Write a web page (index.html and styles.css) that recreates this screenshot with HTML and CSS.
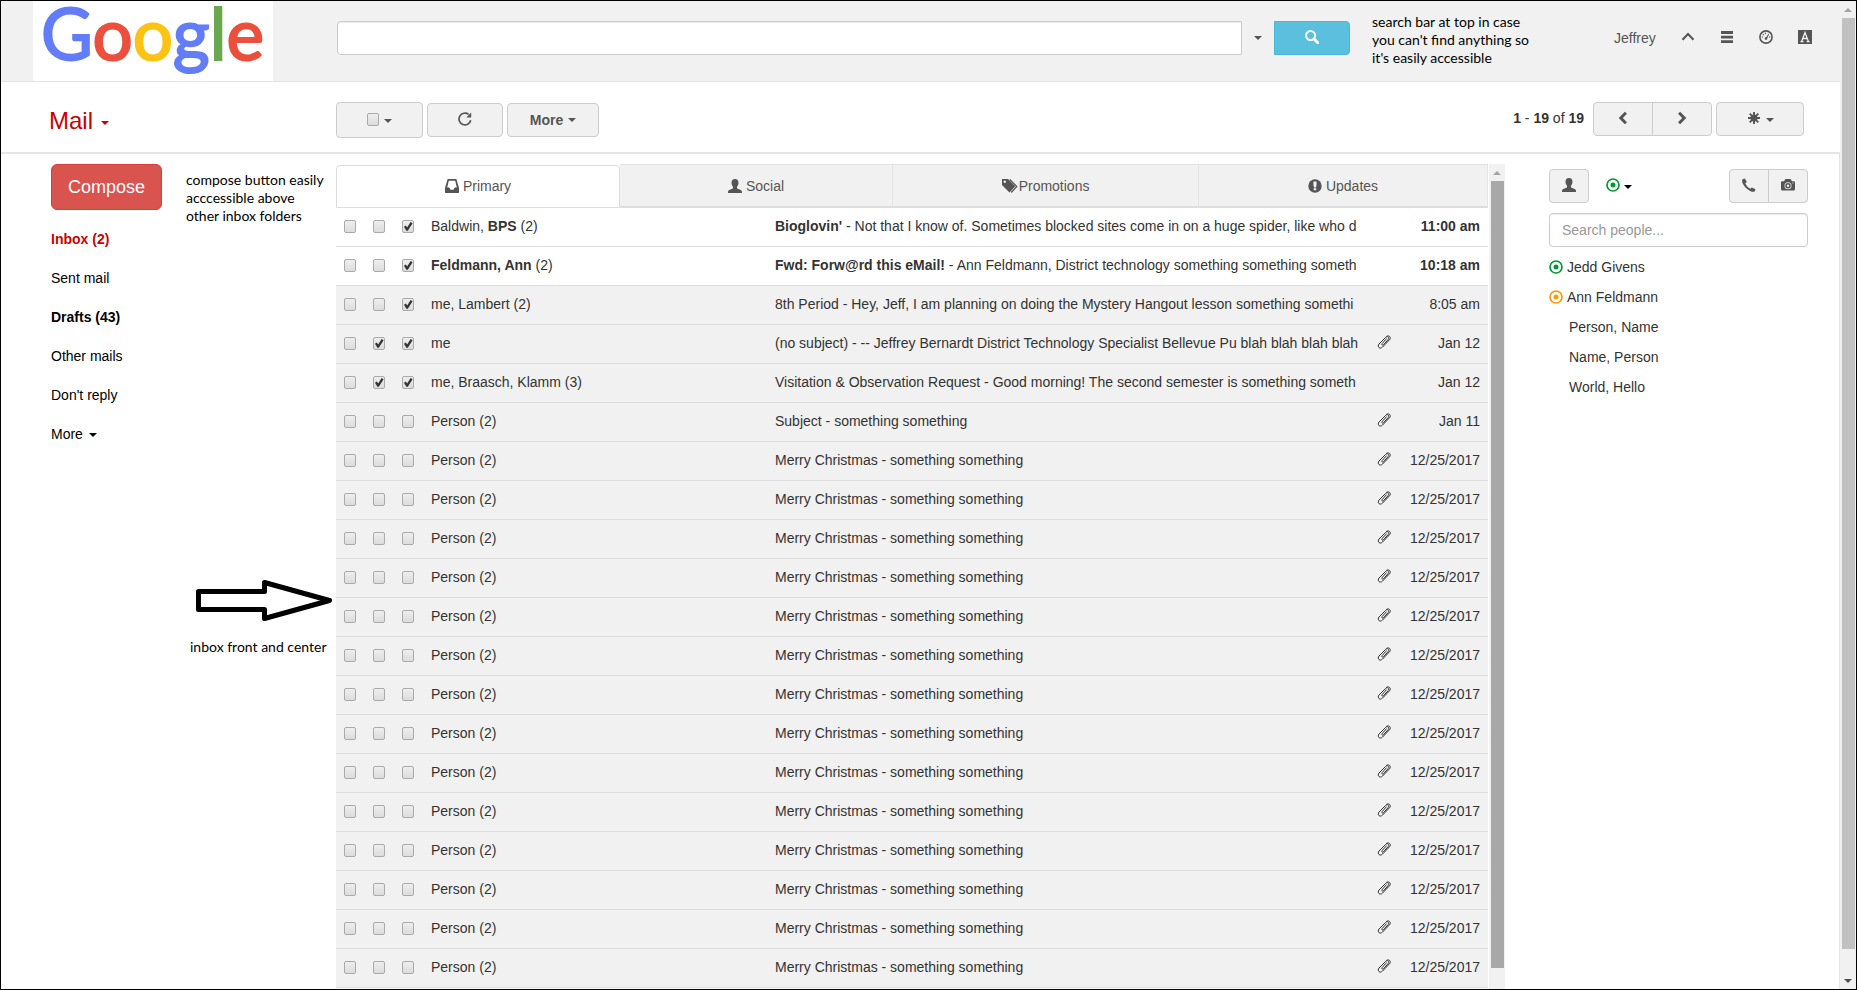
FILE: index.html
```html
<!DOCTYPE html>
<html lang="en">
<head>
<meta charset="utf-8">
<title>Mail</title>
<link rel="stylesheet" href="styles.css">
</head>
<body>
<svg class="sprite" aria-hidden="true">
  <symbol id="search" viewBox="0 0 14 14"><circle cx="5.6" cy="5.6" r="4.5" fill="none" stroke="currentColor" stroke-width="2"/><path d="M9 9l3.8 3.8" stroke="currentColor" stroke-width="2.8" stroke-linecap="round"/></symbol>
  <symbol id="up" viewBox="0 0 14 14"><path d="M1.5 9.8L7 4l5.500 5.800" fill="none" stroke="currentColor" stroke-width="2"/></symbol>
  <symbol id="list" viewBox="0 0 14 14"><path d="M1 1h12v3H1zM1 5.800h12v2.700H1zM1 10.300h12v2.700H1z" fill="currentColor"/></symbol>
  <symbol id="dash" viewBox="0 0 14 14"><circle cx="7" cy="7" r="6.100" fill="none" stroke="currentColor" stroke-width="1.600"/><path d="M6.300 8.600L9.500 3.800l.6.5L7.800 9z" fill="currentColor"/><circle cx="7" cy="8.600" r="1.300" fill="currentColor"/><path d="M2.700 7h1.400M9.900 7h1.400M3.800 4.200l1 .9M6.500 2.800v1.300" stroke="currentColor" stroke-width="1.200"/></symbol>
  <symbol id="fontbg" viewBox="0 0 14 14"><path fill="currentColor" d="M0 0h14v14H0z"/><path d="M3.600 11.600L7 2.500l3.400 9.100M4.800 8.500h4.200M2.500 11.700h3M8.600 11.700h3" fill="none" stroke="#f1f1f1" stroke-width="1.300"/></symbol>
  <symbol id="refresh" viewBox="0 0 14 14"><path d="M12.700 8.300A5.900 5.900 0 1 1 10.600 2.400" fill="none" stroke="currentColor" stroke-width="1.700"/><path d="M13.200.6v4.900H8.300z" fill="currentColor"/></symbol>
  <symbol id="inbox" viewBox="0 0 14 14"><path fill="currentColor" fill-rule="evenodd" d="M2.600 0h8.800L14 9v4.300a.7.700 0 0 1-.7.700H.7a.7.700 0 0 1-.7-.7V9zM3.800 1.800L2.200 8.500h2.100l1.300 2.200h2.800l1.300-2.200h2.100l-1.600-6.700z"/></symbol>
  <symbol id="user" viewBox="0 0 14 14"><path fill="currentColor" d="M7 0c2.400 0 3.500 1.700 3.500 3.700 0 2-.9 3.200-1.500 4.100v1.500c0 .5 4 1.500 4.800 2.700.2.500.2 1.200.2 2H0c0-.8 0-1.500.2-2C1 10.800 5 9.800 5 9.300V7.800C4.400 6.900 3.500 5.700 3.500 3.700 3.500 1.700 4.600 0 7 0z"/></symbol>
  <symbol id="tags" viewBox="0 0 16 14"><path fill="currentColor" fill-rule="evenodd" d="M0 0h6l7.300 7.300-5.800 6.100L0 6zM2.800 1.600a1.200 1.200 0 1 0 0 2.400 1.200 1.200 0 0 0 0-2.400z"/><path d="M7.800.5l7 7-5.600 6" fill="none" stroke="currentColor" stroke-width="1.200"/></symbol>
  <symbol id="alert" viewBox="0 0 14 14"><circle cx="7" cy="7" r="6.700" fill="currentColor"/><path fill="#f1f1f1" d="M5.400 2.400h3.200v3.100l-.6 2.900H6l-.6-2.900zM5.700 9.300h2.600v2H5.700z"/></symbol>
  <symbol id="left" viewBox="0 0 14 14"><path d="M9.900 1.800L4.800 7l5.100 5.200" fill="none" stroke="currentColor" stroke-width="3"/></symbol>
  <symbol id="right" viewBox="0 0 14 14"><path d="M4.100 1.800L9.200 7l-5.100 5.200" fill="none" stroke="currentColor" stroke-width="3"/></symbol>
  <symbol id="gear" viewBox="0 0 14 14"><circle cx="7" cy="7" r="3.500" fill="currentColor"/><path d="M7 1v12M1 7h12M2.700 2.700l8.600 8.600M11.300 2.700l-8.600 8.600" stroke="currentColor" stroke-width="1.900"/></symbol>
  <symbol id="phone" viewBox="0 0 14 14"><path fill="currentColor" d="M.6 1.300L2.800.4l2 3.300-1.500 1.500c.6 2 2.800 4.600 5 5.600l1.400-1.400 3.800 1.900-.7 1.900c-1.100.9-2.600.8-4.200 0C4.800 11.400 2 8.300.6 5.300 0 3.800-.1 2.300.6 1.300z"/></symbol>
  <symbol id="camera" viewBox="0 0 14 14"><path fill="currentColor" fill-rule="evenodd" d="M4.500 1h5L11 3.200h2.200l.8.800v7.600l-.8.900H.8l-.8-.9V4l.8-.8H3zM7 4.200a3.500 3.500 0 1 0 0 7 3.500 3.500 0 0 0 0-7zM11.500 4.600v1h1v-1z"/><circle cx="7" cy="7.700" r="2" fill="none" stroke="currentColor" stroke-width="1.500"/></symbol>
  <symbol id="record" viewBox="0 0 14 14"><circle cx="7" cy="7" r="6" fill="none" stroke="currentColor" stroke-width="1.700"/><circle cx="7" cy="7" r="2.500" fill="currentColor"/></symbol>
  <symbol id="clip" viewBox="0 0 14 14"><path d="M9.300 3.900L5.200 8.500c-1 1.200.4 2.300 1.400 1.200l4.600-5.200c1.600-2-.9-4-2.700-2L2 9c-2.200 2.700.9 5.700 3.600 3L12.500 4.800c2-2.300-.3-5-2.800-3.600" fill="none" stroke="currentColor" stroke-width="1" stroke-linecap="round"/></symbol>
</svg>
<div class="frame">
<div class="app">
  <header class="top">
    <div class="brand"><a class="logo" href="#" aria-label="Google"><span class="blue">G</span><span class="red">o</span><span class="yellow">o</span><span class="blue">g</span><span class="green">l</span><span class="red">e</span></a></div>
    <form class="search">
      <input class="field search-field" type="text" aria-label="Search mail">
      <button class="plain search-menu" type="button" aria-label="Search options"><i class="caret"></i></button>
      <button class="search-go" type="button" aria-label="Search"><svg class="icon"><use href="#search"/></svg></button>
    </form>
    <p class="note top-note">search bar at top in case<br>you can't find anything so<br>it's easily accessible</p>
    <nav class="account">
      <a class="name" href="#">Jeffrey</a>
      <button class="plain" type="button" aria-label="Collapse"><svg class="icon"><use href="#up"/></svg></button>
      <button class="plain" type="button" aria-label="Menu"><svg class="icon"><use href="#list"/></svg></button>
      <button class="plain" type="button" aria-label="Dashboard"><svg class="icon"><use href="#dash"/></svg></button>
      <button class="plain" type="button" aria-label="Text"><svg class="icon"><use href="#fontbg"/></svg></button>
    </nav>
  </header>
  <div class="toolbar">
    <button class="plain mail" type="button">Mail <i class="caret"></i></button>
    <div class="tools">
      <div class="btn select-all"><input type="checkbox" aria-label="Select all"><button class="plain" type="button" aria-label="Select options"><i class="caret"></i></button></div>
      <button class="btn refresh" type="button" aria-label="Refresh"><svg class="icon"><use href="#refresh"/></svg></button>
      <button class="btn more" type="button">More <i class="caret"></i></button>
    </div>
    <span class="count"><b>1</b> - <b>19</b> of <b>19</b></span>
    <div class="group">
      <button class="btn page" type="button" aria-label="Previous"><svg class="icon"><use href="#left"/></svg></button>
      <button class="btn page" type="button" aria-label="Next"><svg class="icon"><use href="#right"/></svg></button>
    </div>
    <button class="btn settings" type="button" aria-label="Settings"><svg class="icon"><use href="#gear"/></svg><i class="caret"></i></button>
  </div>
  <div class="body">
    <aside class="side">
      <nav class="folders">
        <button class="compose" type="button">Compose</button>
        <a class="current" href="#">Inbox (2)</a>
        <a href="#">Sent mail</a>
        <a class="strong" href="#">Drafts (43)</a>
        <a href="#">Other mails</a>
        <a href="#">Don't reply</a>
        <a href="#">More <i class="caret"></i></a>
      </nav>
      <div class="notes">
        <p class="note">compose button easily<br>acccessible above<br>other inbox folders</p>
        <svg class="arrow" viewBox="0 0 136 42" aria-hidden="true"><path d="M2.500 11.500h66V2.500L133.500 20.500 68.500 38.500v-9h-66z" fill="#fff" stroke="#000" stroke-width="5" stroke-linejoin="round"/></svg>
        <p class="note inbox-note">inbox front and center</p>
      </div>
    </aside>
    <main class="list">
      <div class="mails">
        <div class="tabs" role="tablist">
          <button class="tab primary" role="tab" aria-selected="true"><svg class="icon"><use href="#inbox"/></svg> Primary</button>
          <button class="tab social" role="tab"><svg class="icon"><use href="#user"/></svg> Social</button>
          <button class="tab promotions" role="tab"><svg class="icon wide"><use href="#tags"/></svg>Promotions</button>
          <button class="tab updates" role="tab"><svg class="icon"><use href="#alert"/></svg> Updates</button>
        </div>
        <table class="table">
          <colgroup><col class="c-box"><col class="c-box"><col class="c-box"><col class="c-from"><col><col class="c-clip"><col class="c-date"></colgroup>
          <tbody>
          <tr class="unread"><td><input type="checkbox" aria-label="Select"></td><td><input type="checkbox" aria-label="Star"></td><td><input type="checkbox" aria-label="Important" checked></td><td>Baldwin, <b>BPS</b> (2)</td><td><b>Bioglovin'</b> - Not that I know of. Sometimes blocked sites come in on a huge spider, like who d</td><td></td><td><b>11:00 am</b></td></tr>
          <tr class="unread"><td><input type="checkbox" aria-label="Select"></td><td><input type="checkbox" aria-label="Star"></td><td><input type="checkbox" aria-label="Important" checked></td><td><b>Feldmann, Ann</b> (2)</td><td><b>Fwd: Forw@rd this eMail!</b> - Ann Feldmann, District technology something something someth</td><td></td><td><b>10:18 am</b></td></tr>
          <tr><td><input type="checkbox" aria-label="Select"></td><td><input type="checkbox" aria-label="Star"></td><td><input type="checkbox" aria-label="Important" checked></td><td>me, Lambert (2)</td><td>8th Period - Hey, Jeff, I am planning on doing the Mystery Hangout lesson something somethi</td><td></td><td>8:05 am</td></tr>
          <tr><td><input type="checkbox" aria-label="Select"></td><td><input type="checkbox" aria-label="Star" checked></td><td><input type="checkbox" aria-label="Important" checked></td><td>me</td><td>(no subject) - -- Jeffrey Bernardt District Technology Specialist Bellevue Pu blah blah blah blah</td><td><svg class="icon"><use href="#clip"/></svg></td><td>Jan 12</td></tr>
          <tr><td><input type="checkbox" aria-label="Select"></td><td><input type="checkbox" aria-label="Star" checked></td><td><input type="checkbox" aria-label="Important" checked></td><td>me, Braasch, Klamm (3)</td><td>Visitation &amp; Observation Request - Good morning! The second semester is something someth</td><td></td><td>Jan 12</td></tr>
          <tr><td><input type="checkbox" aria-label="Select"></td><td><input type="checkbox" aria-label="Star"></td><td><input type="checkbox" aria-label="Important"></td><td>Person (2)</td><td>Subject - something something</td><td><svg class="icon"><use href="#clip"/></svg></td><td>Jan 11</td></tr>
          <tr><td><input type="checkbox" aria-label="Select"></td><td><input type="checkbox" aria-label="Star"></td><td><input type="checkbox" aria-label="Important"></td><td>Person (2)</td><td>Merry Christmas - something something</td><td><svg class="icon"><use href="#clip"/></svg></td><td>12/25/2017</td></tr>
          <tr><td><input type="checkbox" aria-label="Select"></td><td><input type="checkbox" aria-label="Star"></td><td><input type="checkbox" aria-label="Important"></td><td>Person (2)</td><td>Merry Christmas - something something</td><td><svg class="icon"><use href="#clip"/></svg></td><td>12/25/2017</td></tr>
          <tr><td><input type="checkbox" aria-label="Select"></td><td><input type="checkbox" aria-label="Star"></td><td><input type="checkbox" aria-label="Important"></td><td>Person (2)</td><td>Merry Christmas - something something</td><td><svg class="icon"><use href="#clip"/></svg></td><td>12/25/2017</td></tr>
          <tr><td><input type="checkbox" aria-label="Select"></td><td><input type="checkbox" aria-label="Star"></td><td><input type="checkbox" aria-label="Important"></td><td>Person (2)</td><td>Merry Christmas - something something</td><td><svg class="icon"><use href="#clip"/></svg></td><td>12/25/2017</td></tr>
          <tr><td><input type="checkbox" aria-label="Select"></td><td><input type="checkbox" aria-label="Star"></td><td><input type="checkbox" aria-label="Important"></td><td>Person (2)</td><td>Merry Christmas - something something</td><td><svg class="icon"><use href="#clip"/></svg></td><td>12/25/2017</td></tr>
          <tr><td><input type="checkbox" aria-label="Select"></td><td><input type="checkbox" aria-label="Star"></td><td><input type="checkbox" aria-label="Important"></td><td>Person (2)</td><td>Merry Christmas - something something</td><td><svg class="icon"><use href="#clip"/></svg></td><td>12/25/2017</td></tr>
          <tr><td><input type="checkbox" aria-label="Select"></td><td><input type="checkbox" aria-label="Star"></td><td><input type="checkbox" aria-label="Important"></td><td>Person (2)</td><td>Merry Christmas - something something</td><td><svg class="icon"><use href="#clip"/></svg></td><td>12/25/2017</td></tr>
          <tr><td><input type="checkbox" aria-label="Select"></td><td><input type="checkbox" aria-label="Star"></td><td><input type="checkbox" aria-label="Important"></td><td>Person (2)</td><td>Merry Christmas - something something</td><td><svg class="icon"><use href="#clip"/></svg></td><td>12/25/2017</td></tr>
          <tr><td><input type="checkbox" aria-label="Select"></td><td><input type="checkbox" aria-label="Star"></td><td><input type="checkbox" aria-label="Important"></td><td>Person (2)</td><td>Merry Christmas - something something</td><td><svg class="icon"><use href="#clip"/></svg></td><td>12/25/2017</td></tr>
          <tr><td><input type="checkbox" aria-label="Select"></td><td><input type="checkbox" aria-label="Star"></td><td><input type="checkbox" aria-label="Important"></td><td>Person (2)</td><td>Merry Christmas - something something</td><td><svg class="icon"><use href="#clip"/></svg></td><td>12/25/2017</td></tr>
          <tr><td><input type="checkbox" aria-label="Select"></td><td><input type="checkbox" aria-label="Star"></td><td><input type="checkbox" aria-label="Important"></td><td>Person (2)</td><td>Merry Christmas - something something</td><td><svg class="icon"><use href="#clip"/></svg></td><td>12/25/2017</td></tr>
          <tr><td><input type="checkbox" aria-label="Select"></td><td><input type="checkbox" aria-label="Star"></td><td><input type="checkbox" aria-label="Important"></td><td>Person (2)</td><td>Merry Christmas - something something</td><td><svg class="icon"><use href="#clip"/></svg></td><td>12/25/2017</td></tr>
          <tr><td><input type="checkbox" aria-label="Select"></td><td><input type="checkbox" aria-label="Star"></td><td><input type="checkbox" aria-label="Important"></td><td>Person (2)</td><td>Merry Christmas - something something</td><td><svg class="icon"><use href="#clip"/></svg></td><td>12/25/2017</td></tr>
          <tr><td><input type="checkbox" aria-label="Select"></td><td><input type="checkbox" aria-label="Star"></td><td><input type="checkbox" aria-label="Important"></td><td>Person (2)</td><td>Merry Christmas - something something</td><td><svg class="icon"><use href="#clip"/></svg></td><td>12/25/2017</td></tr>
          </tbody>
        </table>
      </div>
      <div class="scroll list-scroll" aria-hidden="true"><i class="scroll-up"></i><div class="thumb"></div></div>
    </main>
    <aside class="people">
      <div class="people-tools">
        <button class="btn small" type="button" aria-label="Contacts"><svg class="icon"><use href="#user"/></svg></button>
        <button class="plain status" type="button" aria-label="Status"><svg class="icon online"><use href="#record"/></svg><i class="caret"></i></button>
        <div class="group">
          <button class="btn small" type="button" aria-label="Call"><svg class="icon"><use href="#phone"/></svg></button>
          <button class="btn small" type="button" aria-label="Video"><svg class="icon"><use href="#camera"/></svg></button>
        </div>
      </div>
      <input class="field people-field" type="text" placeholder="Search people..." aria-label="Search people">
      <ul class="contacts">
        <li><svg class="icon online"><use href="#record"/></svg>Jedd Givens</li>
        <li><svg class="icon away"><use href="#record"/></svg>Ann Feldmann</li>
        <li class="offline">Person, Name</li>
        <li class="offline">Name, Person</li>
        <li class="offline">World, Hello</li>
      </ul>
    </aside>
  </div>
</div>
<div class="scroll page-scroll" aria-hidden="true"><i class="scroll-up"></i><div class="thumb"></div><i class="scroll-down"></i></div>
</div>
</body>
</html>
```
FILE: styles.css
```css
* { box-sizing: border-box; }
body {
  margin: 0;
  font: 14px/20px "Liberation Sans", Arial, sans-serif;
  color: #333;
  background: #fff;
}
button, input { font: inherit; color: inherit; }
button { cursor: pointer; }
a { color: inherit; text-decoration: none; }
p, ul { margin: 0; padding: 0; list-style: none; }
.sprite { display: none; }
.icon { display: block; width: 14px; height: 14px; flex: none; }
.icon.wide { width: 16px; }
.caret {
  display: inline-block;
  border: 4px solid transparent;
  border-top-color: currentColor;
  border-bottom: 0;
  vertical-align: middle;
}
.select-all .caret, .settings .caret, .status .caret, .mail .caret { margin-top: 3px; }
.plain {
  display: flex;
  align-items: center;
  padding: 0;
  border: 0;
  background: none;
}
.note {
  font: 14px/18px Lato, Calibri, sans-serif;
  color: #000;
  white-space: nowrap;
}

/* frame */
.frame {
  display: flex;
  height: 100vh;
  border: 1px solid #000;
  overflow: hidden;
}
.app {
  display: flex;
  flex-direction: column;
  flex: 1;
  min-width: 0;
}

/* header */
.top {
  display: flex;
  height: 81px;
  background: #f1f1f1;
  border-bottom: 1px solid #e5e5e5;
}
.brand { flex: none; width: 335px; padding-left: 32px; }
.logo {
  display: block;
  width: 240px;
  height: 80px;
  padding-left: 8px;
  background: #fff;
  font: 71px/64px Lato, sans-serif;
  -webkit-text-stroke: 2px currentColor;
}
.blue { color: #637dfa; }
.red { color: #ec4f3c; }
.yellow { color: #fcc314; }
.green { color: #6aa84f; }
.search { display: flex; flex: 1; height: 54px; padding-top: 20px; padding-left: 1px; }
.field {
  display: block;
  height: 34px;
  padding: 6px 12px;
  border: 1px solid #ccc;
  border-radius: 4px;
  background: #fff;
  box-shadow: inset 0 1px 1px rgba(0, 0, 0, 0.08);
}
.search-field { flex: 1; min-width: 0; border-radius: 4px 0 0 4px; }
.search-menu { width: 32px; justify-content: center; color: #555; }
.search-go {
  display: flex;
  align-items: center;
  justify-content: center;
  width: 76px;
  padding: 0 0 2px;
  border: 1px solid #46b8da;
  border-radius: 0 4px 4px 0;
  background: #5bc0de;
  color: #fff;
}
.top-note { width: 242px; margin-left: 22px; padding-top: 12px; }
.account {
  display: flex;
  align-items: center;
  gap: 25px;
  height: 72px;
  width: 226px;
  padding-right: 28px;
  color: #555;
}
.account .name { flex: 1; padding-top: 2px; }

/* toolbar */
.toolbar {
  display: flex;
  align-items: center;
  height: 72px;
  padding: 4px 36px 0 48px;
  border-bottom: 2px solid #e5e5e5;
}
.mail { width: 287px; height: 46px; padding-top: 4px; gap: 8px; font-size: 24px; color: #c00; }
.tools { display: flex; align-items: center; gap: 4px; flex: 1; padding-top: 2px; }
.btn {
  display: flex;
  align-items: center;
  justify-content: center;
  gap: 5px;
  height: 34px;
  padding: 0 0 2px;
  border: 1px solid #ccc;
  border-radius: 4px;
  background: #f1f1f1;
  color: #555;
}
.select-all { width: 87px; height: 36px; }
.refresh { width: 76px; }
.more { width: 92px; padding: 0; font-weight: bold; }
.page { width: 60px; }
.settings { width: 88px; margin-left: 4px; }
.group { display: flex; }
.group .btn:first-child { border-radius: 4px 0 0 4px; }
.group .btn:last-child { margin-left: -1px; border-radius: 0 4px 4px 0; }
.count { margin-right: 9px; padding-bottom: 2px; }

input[type="checkbox"] {
  appearance: none;
  display: block;
  width: 12px;
  height: 13px;
  margin: 0;
  border: 1px solid #aaa;
  border-radius: 2px;
  background: linear-gradient(#eee, #dcdcdc);
}
input[type="checkbox"]:checked::after {
  content: "";
  display: block;
  width: 10px;
  height: 11px;
  background: #333;
  clip-path: polygon(10% 52%, 28% 42%, 42% 60%, 76% 8%, 96% 20%, 48% 88%, 34% 88%);
}

/* body */
.body { display: flex; flex: 1; min-height: 0; border-right: 1px solid #e5e5e5; }
.side { display: flex; flex: none; width: 335px; padding: 10px 0 0 50px; }
.folders {
  display: flex;
  flex-direction: column;
  align-items: flex-start;
  width: 135px;
  color: #000;
}
.compose {
  width: 111px;
  height: 46px;
  margin-bottom: 10px;
  padding: 0;
  border: 1px solid #d43f3a;
  border-radius: 6px;
  background: #d9534f;
  color: #fff;
  font-size: 18px;
}
.folders a { line-height: 39px; }
.folders .caret { margin-left: 2px; }
.folders .current { color: #c00; font-weight: bold; }
.folders .strong { font-weight: bold; }
.notes { padding-top: 7px; }
.arrow { display: block; width: 136px; height: 42px; margin: 355px 0 16px 10px; }
.inbox-note { padding-left: 4px; }

/* mail list */
.list { display: flex; flex: 1; min-width: 0; margin-top: 10px; }
.mails { flex: 1; min-width: 0; overflow: hidden; }
.tabs { display: flex; height: 44px; }
.tab {
  display: flex;
  align-items: center;
  justify-content: center;
  gap: 4px;
  padding: 0;
  border: 1px solid #e5e5e5;
  border-left: 0;
  border-bottom: 2px solid #ddd;
  background: #f1f1f1;
  color: #555;
}
.primary {
  flex: 283 1 0;
  margin-top: 1px;
  padding-bottom: 2px;
  border: 1px solid #ddd;
  border-radius: 4px 4px 0 0;
  background: #fff;
}
.social { flex: 273 1 0; }
.promotions { flex: 306 1 0; gap: 1px; }
.updates { flex: 289 1 0; }
.table { width: 100%; border-spacing: 0; table-layout: fixed; }
.c-box { width: 29px; }
.c-from { width: 344px; }
.c-clip { width: 33px; }
.c-date { width: 86px; }
.table tr { background: #f1f1f1; }
.table .unread { background: #fff; }
.table td {
  height: 39px;
  padding: 8px 8px 10px;
  border-bottom: 1px solid #ddd;
  vertical-align: top;
  white-space: nowrap;
}
.table td:last-child { padding-left: 0; text-align: right; }
.table input { margin-top: 4px; }
.table .icon { margin-top: 2px; }

/* scrollbars */
.scroll { display: flex; flex: none; flex-direction: column; align-items: center; background: #f1f1f1; }
.list-scroll { width: 16px; margin-left: 1px; padding-bottom: 21px; }
.page-scroll { width: 16px; }
.thumb { flex: 1; width: 13px; background: #a8a8a8; }
.page-scroll .thumb { background: #c1c1c1; }
.scroll-up, .scroll-down { border: 4px solid transparent; }
.scroll-up { margin-bottom: 6px; border-top-width: 7px; border-bottom: 4px solid #a3a3a3; border-top-color: transparent; }
.scroll-down { margin: 30px 0 2px; border-top: 4px solid #505050; }

/* people */
.people { flex: none; width: 334px; padding: 15px 31px 0 44px; }
.people-tools { display: flex; height: 34px; margin-bottom: 10px; }
.people-tools .group { margin-left: auto; }
.small { width: 40px; }
.status { margin-left: 17px; padding-bottom: 2px; gap: 4px; color: #000; }
.online { color: #093; }
.away { color: #f90; }
.people-field { width: 100%; }
.people-field::placeholder { color: #999; }
.contacts { padding-top: 5px; }
.contacts li { display: flex; align-items: center; gap: 4px; height: 30px; }
.contacts .offline { padding-left: 20px; }
```
